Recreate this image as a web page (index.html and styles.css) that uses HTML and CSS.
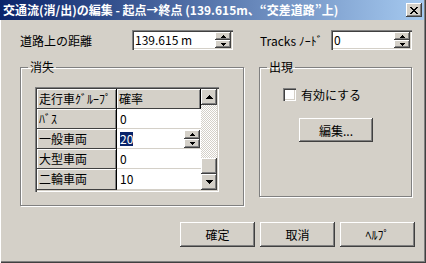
FILE: index.html
```html
<!DOCTYPE html>
<html lang="ja">
<head>
    <meta charset="UTF-8">
    <title>交通流(消/出)の編集</title>
    <link rel="stylesheet" href="styles.css">
</head>
<body>
<div class="window">

    <!-- Titelleiste -->
    <div class="titlebar">
        <span class="title">交通流(消/出)の編集 - 起点→終点 (139.615m、“交差道路”上)</span>
        <span class="close-btn">
            <svg width="8" height="7" viewBox="0 0 8 7"><path d="M0 0h2v1h1v1h2V1h1V0h2v1H7v1H6v1H5v1h1v1h1v1h1v1H6V6H5V5H3v1H2v1H0V6h1V5h1V4h1V3H2V2H1V1H0z" fill="#000"/></svg>
        </span>
    </div>

    <div class="content">
        <div class="field-row">
            <span class="lbl-dist">道路上の距離</span>
            <div class="spin-edit edit-dist">
                <span class="edit-text">139.615 m</span>
                <div class="spinner">
                    <span class="spin-btn"><svg width="5" height="3"><path d="M2 0h1v1h1v1h1v1H0V2h1V1h1z"/></svg></span>
                    <span class="spin-btn"><svg width="5" height="3"><path d="M0 0h5v1H4v1H3v1H2V2H1V1H0z"/></svg></span>
                </div>
            </div>
            <span class="lbl-tracks">Tracks ﾉｰﾄﾞ</span>
            <div class="spin-edit edit-tracks">
                <span class="edit-text">0</span>
                <div class="spinner">
                    <span class="spin-btn"><svg width="5" height="3"><path d="M2 0h1v1h1v1h1v1H0V2h1V1h1z"/></svg></span>
                    <span class="spin-btn"><svg width="5" height="3"><path d="M0 0h5v1H4v1H3v1H2V2H1V1H0z"/></svg></span>
                </div>
            </div>
        </div>

        <div class="groups">
            <fieldset class="group group-lost">
                <legend>消失</legend>
                <div class="grid">
                    <div class="grid-table">
                        <div class="gh">走行車ｸﾞﾙｰﾌﾟ</div><div class="gh">確率</div>
                        <div class="gh">ﾊﾞｽ</div><div class="gc">0</div>
                        <div class="gh">一般車両</div>
                        <div class="gc gc-edit">
                            <span class="sel">20</span>
                            <div class="spinner cell-spinner">
                                <span class="spin-btn"><svg width="5" height="3"><path d="M2 0h1v1h1v1h1v1H0V2h1V1h1z"/></svg></span>
                                <span class="spin-btn"><svg width="5" height="3"><path d="M0 0h5v1H4v1H3v1H2V2H1V1H0z"/></svg></span>
                            </div>
                        </div>
                        <div class="gh">大型車両</div><div class="gc">0</div>
                        <div class="gh">二輪車両</div><div class="gc">10</div>
                    </div>
                    <div class="vscroll">
                        <span class="sb-btn"><svg width="7" height="4"><path d="M3 0h1v1h1v1h1v1h1v1H0V3h1V2h1V1h1z"/></svg></span>
                        <span class="sb-track"></span>
                        <span class="sb-thumb"></span>
                        <span class="sb-btn"><svg width="7" height="4"><path d="M0 0h7v1H6v1H5v1H4v1H3V3H2V2H1V1H0z"/></svg></span>
                    </div>
                </div>
            </fieldset>

            <fieldset class="group group-appear">
                <legend>出現</legend>
                <label class="check"><span class="check-box"></span>有効にする</label>
                <button class="btn btn-edit">編集...</button>
            </fieldset>
        </div>

        <div class="button-row">
            <button class="btn">確定</button>
            <button class="btn">取消</button>
            <button class="btn">ﾍﾙﾌﾟ</button>
        </div>
    </div>
</div>
</body>
</html>
```

FILE: styles.css
```css
* {
    box-sizing: border-box;
}

html, body {
    margin: 0;
    padding: 0;
}

body {
    width: 426px;
    height: 263px;
    overflow: hidden;
    background-color: #d4d0c8;
    font-family: "Noto Sans CJK JP", sans-serif;
    font-size: 12px;
    color: #000;
}

.window {
    width: 426px;
    height: 263px;
    display: flex;
    flex-direction: column;
    background-color: #d4d0c8;
    box-shadow: inset 1px 0 #fff, inset -1px -1px #404040, inset -2px -2px #808080;
}

/* Titelleiste */
.titlebar {
    height: 20px;
    margin-right: 2px;
    display: flex;
    align-items: center;
    justify-content: space-between;
    padding: 0 2px 0 3px;
    background: linear-gradient(to right, #0a246a, #a6caf0);
    color: #fff;
    font-weight: bold;
    white-space: nowrap;
}

.title {
    line-height: 20px;
}

.close-btn {
    width: 16px;
    height: 14px;
    display: flex;
    align-items: center;
    justify-content: center;
    background-color: #d4d0c8;
    box-shadow: inset -1px -1px #404040, inset 1px 1px #fff, inset -2px -2px #808080;
}

.content {
    display: flex;
    flex-direction: column;
    padding: 0 11px 0 20px;
}

/* Eingabefelder oben */
.field-row {
    display: flex;
    align-items: center;
    height: 20px;
    margin-top: 10px;
}

.lbl-dist {
    width: 112px;
}

.lbl-tracks {
    width: 71px;
    margin-left: 27px;
}

.spin-edit {
    height: 20px;
    display: flex;
    align-items: center;
    padding: 2px 2px 2px 3px;
    background-color: #fff;
    box-shadow: inset 1px 1px #808080, inset 2px 2px #404040, inset -1px -1px #fff, inset -2px -2px #d4d0c8;
}

.edit-dist {
    width: 101px;
}

.edit-tracks {
    width: 81px;
}

.edit-text {
    flex: 1;
    line-height: 16px;
}

.spinner {
    width: 16px;
    height: 16px;
    display: flex;
    flex-direction: column;
}

.spin-btn {
    flex: 1;
    display: flex;
    align-items: center;
    justify-content: center;
    background-color: #d4d0c8;
    box-shadow: inset -1px -1px #404040, inset 1px 1px #fff, inset -2px -2px #808080;
}

.spin-btn svg, .sb-btn svg {
    display: block;
    fill: #000;
}

/* Gruppen */
.groups {
    display: flex;
    align-items: flex-start;
    gap: 15px;
    margin-top: 10px;
}

.group {
    margin: 0;
    padding: 0;
    min-width: 0;
    border: 1px solid #808080;
    box-shadow: inset 1px 1px #fff, 1px 1px #fff;
}

.group legend {
    margin-left: 7px;
    padding: 0 2px;
    line-height: 14px;
}

.group-lost {
    width: 224px;
    height: 146px;
}

.group-appear {
    width: 153px;
    height: 137px;
}

/* Tabelle */
.grid {
    display: flex;
    width: 184px;
    height: 105px;
    margin: 13px 0 0 14px;
    padding: 2px;
    background-color: #fff;
    box-shadow: inset 1px 1px #808080, inset 2px 2px #404040, inset -1px -1px #fff, inset -2px -2px #d4d0c8;
}

.grid-table {
    display: grid;
    grid-template-columns: 80px 84px;
    grid-template-rows: 20px 20px 20px 20px 21px;
}

.gh {
    padding-left: 2px;
    line-height: 19px;
    background-color: #d4d0c8;
    border-right: 1px solid #000;
    border-bottom: 1px solid #404040;
    box-shadow: inset 1px 1px #fff, inset -1px 0 #808080;
    white-space: nowrap;
}

.gc {
    padding-left: 3px;
    line-height: 19px;
    background-color: #fff;
    border-bottom: 1px solid #d4d0c8;
}

.gc-edit {
    display: flex;
    align-items: center;
    padding-right: 1px;
}

.sel {
    background-color: #0a246a;
    color: #fff;
    line-height: 14px;
}

.cell-spinner {
    margin-left: auto;
    height: 18px;
}

.vscroll {
    width: 16px;
    display: flex;
    flex-direction: column;
}

.sb-btn, .sb-thumb {
    height: 16px;
    display: flex;
    align-items: center;
    justify-content: center;
    background-color: #d4d0c8;
    box-shadow: inset -1px -1px #404040, inset 1px 1px #fff, inset -2px -2px #808080;
}

.sb-track {
    flex: 1;
    background: repeating-conic-gradient(#fff 0 25%, #d4d0c8 0 50%) 0 0 / 2px 2px;
}

/* Checkbox und Buttons */
.check {
    display: flex;
    align-items: center;
    gap: 5px;
    margin: 14px 0 0 23px;
    line-height: 13px;
}

.check-box {
    width: 13px;
    height: 13px;
    background-color: #fff;
    box-shadow: inset 1px 1px #808080, inset 2px 2px #404040, inset -1px -1px #fff, inset -2px -2px #d4d0c8;
}

.btn {
    width: 75px;
    height: 25px;
    padding: 0;
    border: none;
    background-color: #d4d0c8;
    font-family: "Noto Sans CJK JP", sans-serif;
    font-size: 12px;
    color: #000;
    box-shadow: inset -1px -1px #404040, inset 1px 1px #fff, inset -2px -2px #808080;
}

.btn-edit {
    display: block;
    width: 74px;
    height: 24px;
    margin: 17px 0 0 39px;
}

.button-row {
    display: flex;
    justify-content: flex-end;
    gap: 5px;
    margin-top: 16px;
}
```
